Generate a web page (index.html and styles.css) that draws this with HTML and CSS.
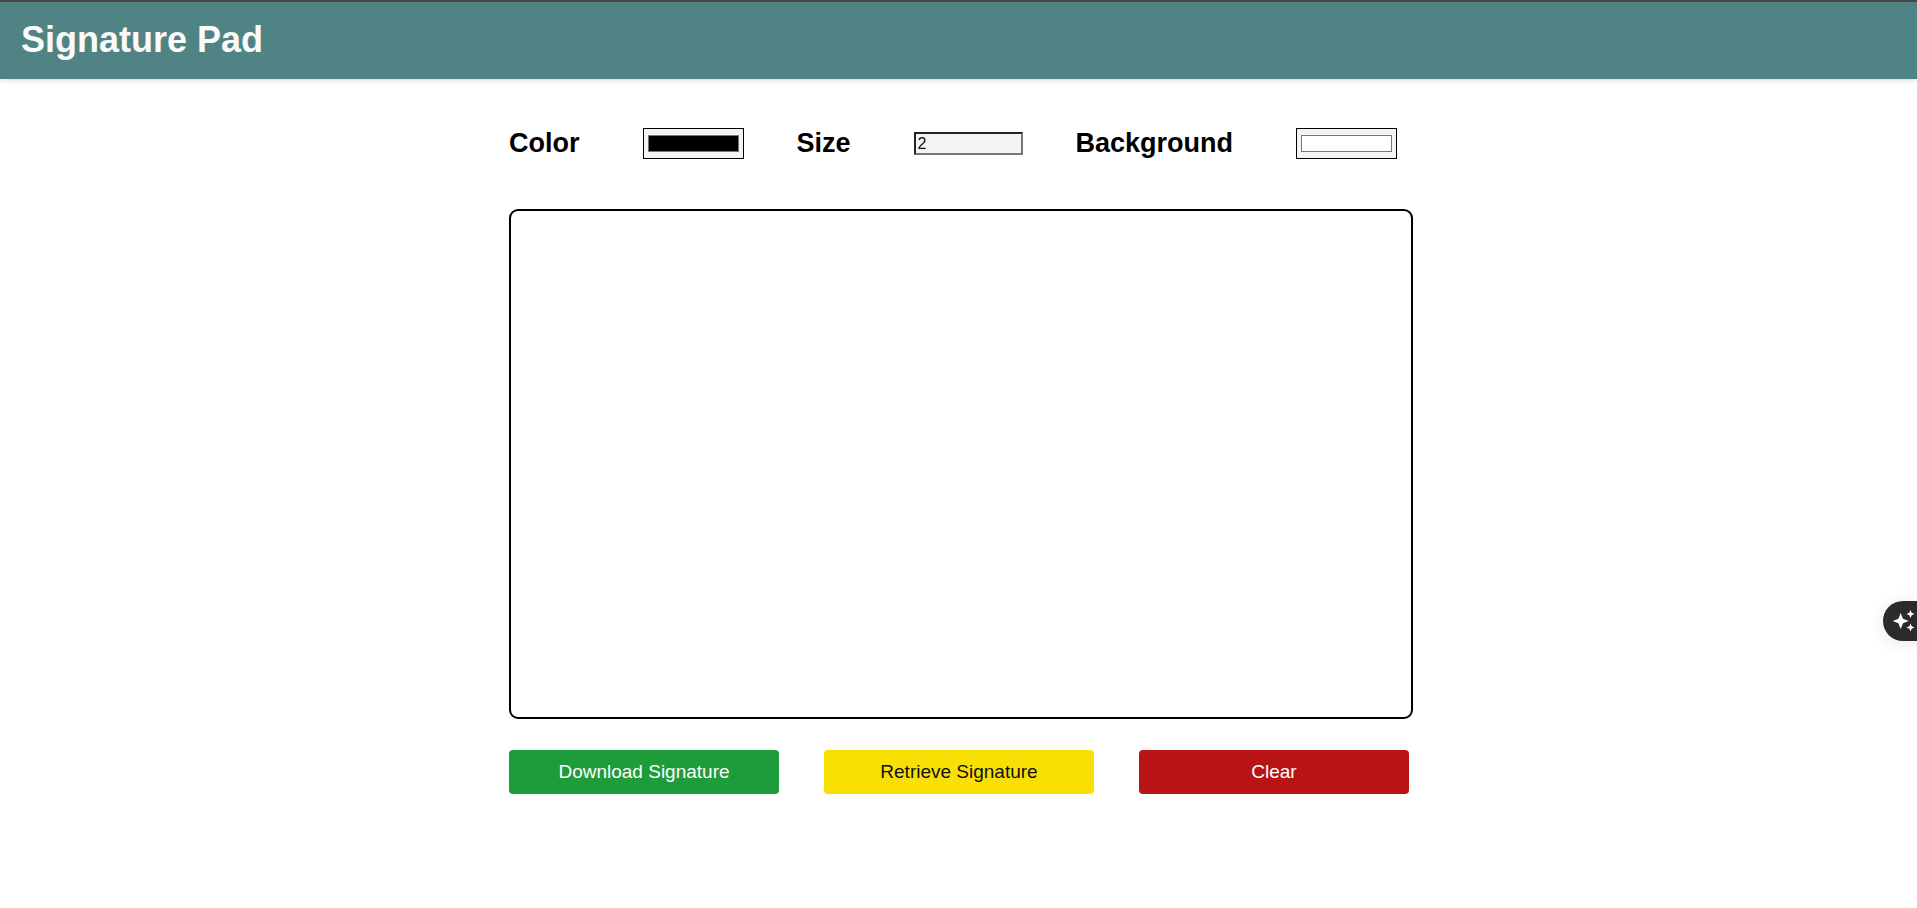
FILE: index.html
```html
<!DOCTYPE html>
<html lang="en">
<head>
<meta charset="utf-8">
<meta name="viewport" content="width=device-width, initial-scale=1">
<title>Signature Pad</title>
<link rel="stylesheet" href="styles.css">
</head>
<body>
<header class="header">
  <h1 class="title">Signature Pad</h1>
</header>
<main class="pad">
  <div class="controls">
    <div class="control">
      <label class="label" for="color">Color</label>
      <input class="swatch" type="color" id="color" value="#000000">
    </div>
    <div class="control">
      <label class="label" for="size">Size</label>
      <input class="size" type="text" id="size" value="2">
    </div>
    <div class="control">
      <label class="label" for="background">Background</label>
      <input class="swatch" type="color" id="background" value="#ffffff">
    </div>
  </div>
  <canvas class="canvas" width="900" height="506"></canvas>
  <div class="actions">
    <button class="button download" type="button">Download Signature</button>
    <button class="button retrieve" type="button">Retrieve Signature</button>
    <button class="button clear" type="button">Clear</button>
  </div>
</main>
<button class="assistant" type="button" aria-label="Assistant">
  <svg class="sparkles" viewBox="0 0 24 24" aria-hidden="true">
    <path d="M8.700 4 L11 9.700 L16.700 12 L11 14.300 L8.700 20 L6.400 14.300 L.7 12 L6.400 9.700Z"/>
    <path d="M18.500 1 L19.700 3.800 L22.500 5 L19.700 6.200 L18.500 9 L17.300 6.200 L14.500 5 L17.300 3.800Z"/>
    <path d="M18.500 14.500 L19.700 17.300 L22.500 18.500 L19.700 19.700 L18.500 22.500 L17.300 19.700 L14.500 18.500 L17.300 17.300Z"/>
  </svg>
</button>
</body>
</html>
```
FILE: styles.css
```css
* {
  box-sizing: border-box;
}

body {
  margin: 0;
  background: #fff;
  color: #000;
  font-family: "Liberation Sans", Arial, sans-serif;
}

.header {
  padding: 17px 21px 19px;
  border-top: 2px solid #464646;
  background: #508484;
  box-shadow: 0 1px 5px rgba(80, 132, 132, 0.3);
}

.title {
  margin: 0;
  color: #fafafa;
  font-size: 36px;
  line-height: 41px;
}

.pad {
  max-width: 909px;
  margin: 0 auto;
  padding: 49px 0 20px 5px;
}

.controls {
  display: flex;
  flex-wrap: wrap;
  gap: 20px 53px;
  margin-bottom: 50px;
}

.control {
  display: flex;
  align-items: center;
  gap: 63px;
}

.label {
  font-size: 27px;
  font-weight: bold;
  line-height: 31px;
}

.swatch {
  width: 101px;
  height: 31px;
  padding: 2px;
  border: 1px solid #000;
  border-radius: 0;
  background: #f4f4f4;
}

.size {
  width: 109px;
  height: 23px;
  padding: 1px 2px;
  border: 2px solid #767676;
  border-top-color: #222;
  border-left-color: #222;
  border-radius: 0;
  background: #f4f4f4;
  color: #111;
  font-family: inherit;
  font-size: 16px;
}

.canvas {
  display: block;
  width: 100%;
  border: 2px solid #000;
  border-radius: 9px;
  background: #fff;
}

.actions {
  display: grid;
  grid-template-columns: repeat(3, 1fr);
  gap: 45px;
  margin: 31px 4px 0 0;
}

.button {
  height: 44px;
  padding: 0;
  border: 0;
  border-radius: 4px;
  font-family: inherit;
  font-size: 19px;
}

.download {
  background: #1e9c3a;
  color: #fff;
}

.retrieve {
  background: #f8e004;
  color: #111;
}

.clear {
  background: #b91414;
  color: #fff;
}

.assistant {
  position: fixed;
  top: 601px;
  right: 0;
  width: 34px;
  height: 40px;
  padding: 0 0 0 9px;
  border: 0;
  border-radius: 20px 0 0 20px;
  background: #2b2b2b;
  box-shadow: 0 2px 16px rgba(0, 0, 0, 0.1);
}

.sparkles {
  display: block;
  width: 24px;
  height: 24px;
  fill: #fff;
}
```
